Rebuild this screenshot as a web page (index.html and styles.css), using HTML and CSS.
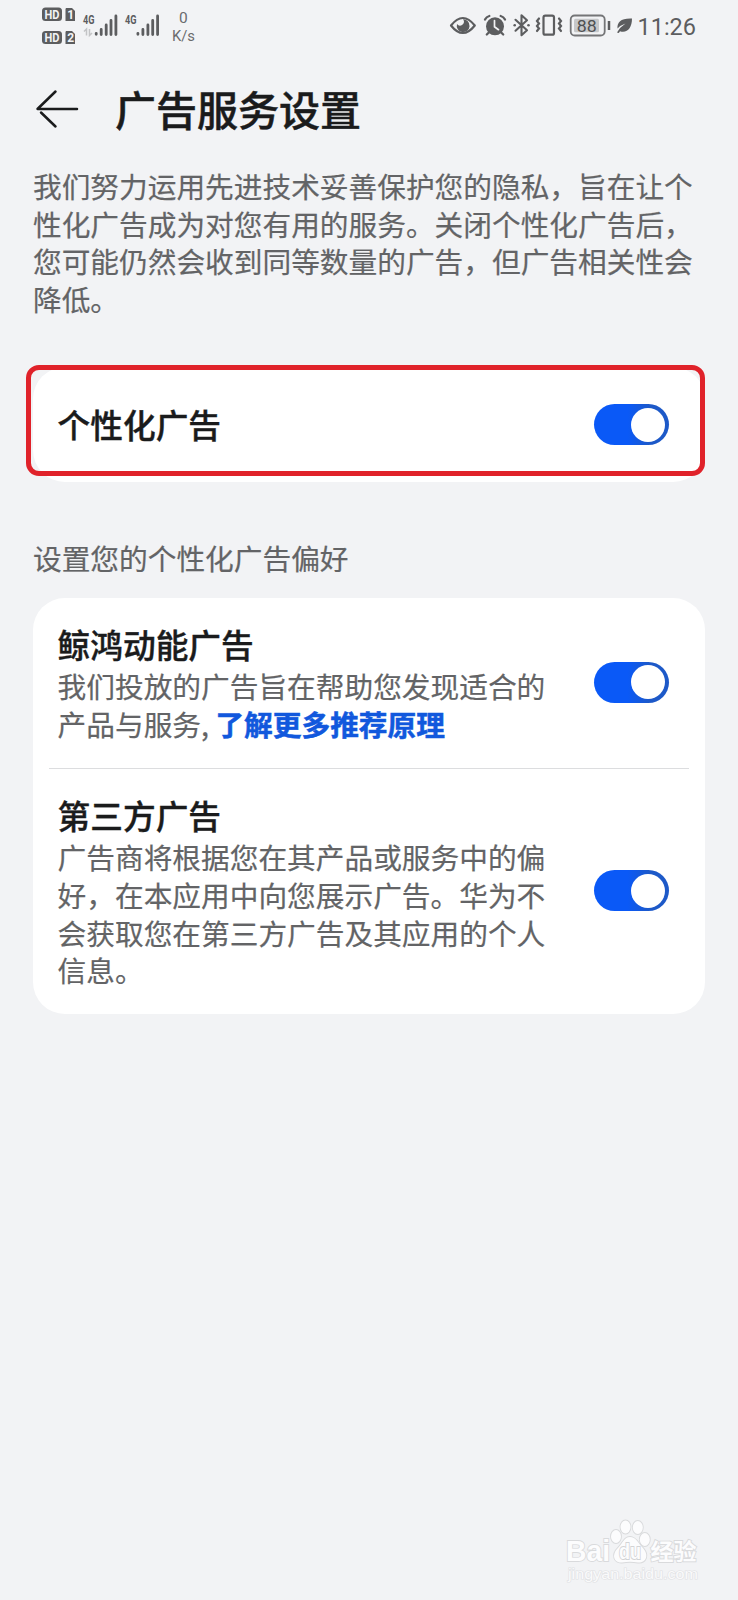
FILE: index.html
```html
<!DOCTYPE html>
<html lang="zh-CN">
<head>
<meta charset="utf-8">
<title>广告服务设置</title>
<link rel="stylesheet" href="styles.css">
</head>
<body>
<div class="screen">
  <header class="status">
    <svg class="status-left" width="160" height="50" viewBox="40 0 160 50">
      <g fill="#5c5d5f">
        <rect x="42" y="7.500" width="20" height="13.500" rx="3.500"/>
        <path d="M66 8h6l3 3v10h-9.500v-12z"/>
        <rect x="42" y="31" width="20" height="13" rx="3.500"/>
        <path d="M66 31h6l3 3v10h-9.500v-12z"/>
      </g>
      <g class="tag">
        <text x="44.500" y="18.500" textLength="15" lengthAdjust="spacingAndGlyphs">HD</text>
        <text x="67.200" y="18.800">1</text>
        <text x="44.500" y="41.800" textLength="15" lengthAdjust="spacingAndGlyphs">HD</text>
        <text x="67.200" y="42.100">2</text>
      </g>
      <g class="net">
        <text x="83" y="24.300" textLength="11.500" lengthAdjust="spacingAndGlyphs">4G</text>
        <text x="125" y="24.300" textLength="11.500" lengthAdjust="spacingAndGlyphs">4G</text>
      </g>
      <g stroke="#5c5d5f" stroke-width="2.800" stroke-linecap="round">
        <path d="M96.200 33.300v1M101.200 29.500v5M106.200 25v9.500M111 20.500v14M115.900 16v18.500"/>
        <path d="M137.900 33.300v1M142.900 29.500v5M147.900 25v9.500M152.700 20.500v14M157.600 16v18.500"/>
      </g>
      <path d="M84 31.500l2.500-2.500v6.500M89.500 29v6.500l2.500-2.500" fill="none" stroke="#c3c4c6" stroke-width="1.500"/>
      <g class="speed">
        <text x="183.300" y="23" text-anchor="middle">0</text>
        <text x="172" y="41" textLength="23" lengthAdjust="spacingAndGlyphs">K/s</text>
      </g>
    </svg>
    <svg class="status-right" width="252" height="50" viewBox="446 0 252 50">
      <path d="M451 25.500Q462.800 10.500 474.800 25.500Q462.800 40.500 451 25.500z" fill="none" stroke="#5c5d5f" stroke-width="2.200" stroke-linejoin="round"/>
      <path d="M463 19.300a3.200 3.200 0 0 1-6 4.700a6.400 6.400 0 1 0 6-4.700z" fill="#5c5d5f"/>
      <circle cx="495" cy="26.300" r="9" fill="#5c5d5f"/>
      <path d="M485 19.500q1.500-2.800 4.300-3.500M505 19.500q-1.500-2.800-4.300-3.500M489.300 32l-2.500 2.500M500.700 32l2.500 2.500" fill="none" stroke="#5c5d5f" stroke-width="2.300" stroke-linecap="round"/>
      <path d="M494.500 20.500v6.200l4 3" fill="none" stroke="#f2f3f5" stroke-width="1.700" stroke-linecap="round"/>
      <path d="M515.500 19.800l11.500 10.500-5.500 4.900v-19.900l5.500 4.900-11.500 10.500" fill="none" stroke="#5c5d5f" stroke-width="2.100" stroke-linejoin="round" stroke-linecap="round"/>
      <circle cx="514.700" cy="25.300" r="1.300" fill="#5c5d5f"/><circle cx="528.500" cy="25.300" r="1.300" fill="#5c5d5f"/>
      <rect x="543.500" y="15.700" width="10.500" height="19" rx="1.800" fill="none" stroke="#5c5d5f" stroke-width="2.200"/>
      <path d="M539 18.500l-2 2.500 2 2.500-2 2.500 2 2.500-2 2.500M559 18.500l2 2.500-2 2.500 2 2.500-2 2.500 2 2.500" fill="none" stroke="#5c5d5f" stroke-width="2.200" stroke-linecap="round"/>
      <rect x="570.700" y="15.500" width="34" height="20" rx="4" fill="none" stroke="#747577" stroke-width="1.800"/>
      <rect x="574" y="18.700" width="25" height="13.600" rx="1.500" fill="#c6c7c9"/>
      <path d="M609 21v9" stroke="#5c5d5f" stroke-width="2.500"/>
      <text class="battery" x="576.700" y="31.900" textLength="20" lengthAdjust="spacingAndGlyphs">88</text>
      <path d="M632 18.500C621 18 617 22 617.500 28.500Q621 25 625.500 23.500Q620 27 617 32.500L618.800 33L620 31.200C627 33.500 632 28 632 18.500z" fill="#5c5d5f"/>
      <text class="clock" x="637.500" y="35" textLength="58.500" lengthAdjust="spacingAndGlyphs">11:26</text>
    </svg>
  </header>

  <div class="titlebar">
    <svg class="back" width="44" height="40" viewBox="0 0 44 40"><path d="M20.500 2.500L2.500 20H42M6 23.500L20.500 37.500" fill="none" stroke="#1a1b1c" stroke-width="2.500" stroke-linecap="round" stroke-linejoin="round"/></svg>
    <h1 class="title">广告服务设置</h1>
  </div>

  <p class="intro">我们努力运用先进技术妥善保护您的隐私，旨在让个<br>性化广告成为对您有用的服务。关闭个性化广告后，<br>您可能仍然会收到同等数量的广告，但广告相关性会<br>降低。</p>

  <section class="card master">
    <h2 class="name">个性化广告</h2>
    <span class="toggle"><span class="knob"></span></span>
    <div class="highlight"></div>
  </section>

  <h3 class="section-label">设置您的个性化广告偏好</h3>

  <section class="card list">
    <div class="item first">
      <div class="copy">
        <h2 class="name">鲸鸿动能广告</h2>
        <p class="desc">我们投放的广告旨在帮助您发现适合的<br>产品与服务, <a class="link">了解更多推荐原理</a></p>
      </div>
      <span class="toggle"><span class="knob"></span></span>
    </div>
    <div class="item second">
      <div class="copy">
        <h2 class="name">第三方广告</h2>
        <p class="desc">广告商将根据您在其产品或服务中的偏<br>好，在本应用中向您展示广告。华为不<br>会获取您在第三方广告及其应用的个人<br>信息。</p>
      </div>
      <span class="toggle"><span class="knob"></span></span>
    </div>
  </section>

  <svg class="watermark" width="140" height="72" viewBox="562 1516 140 72">
    <g class="mark">
      <text class="latin" x="566" y="1561" textLength="44" lengthAdjust="spacingAndGlyphs">Bai</text>
      <ellipse cx="616" cy="1536.500" rx="5" ry="6.500"/>
      <ellipse cx="625.500" cy="1527" rx="5" ry="6.500"/>
      <ellipse cx="637.800" cy="1527.500" rx="5" ry="6.500"/>
      <ellipse cx="644.800" cy="1539.500" rx="5" ry="6.500"/>
      <path d="M630 1537C636 1537 638 1543 642 1547C650 1555 646 1563 638 1562.500Q630 1561 622 1562.500C614 1563 611 1555 618 1548C623 1543 624 1537 630 1537z"/>
      <text class="du" x="619" y="1559" textLength="22" lengthAdjust="spacingAndGlyphs">du</text>
      <text class="han" x="650.500" y="1559.500" textLength="46" lengthAdjust="spacingAndGlyphs">经验</text>
    </g>
    <text class="url" x="568" y="1579" textLength="130" lengthAdjust="spacingAndGlyphs">jingyan.baidu.com</text>
  </svg>
</div>
</body>
</html>
```

FILE: styles.css
```css
* { box-sizing: border-box; }
body {
  margin: 0;
  background: #f2f3f5;
  font-family: "Noto Sans CJK SC", sans-serif;
  color: #1a1b1c;
}
h1, h2, h3, p { margin: 0; }
.screen {
  position: relative;
  width: 738px;
  height: 1600px;
  padding: 0 33px 0 32.6px;
  overflow: hidden;
}
.status {
  display: flex;
  justify-content: space-between;
  height: 50px;
  margin: 0 7px 0 7.4px;
}
.tag { font: bold 12px Roboto, sans-serif; fill: #f2f3f5; }
.net { font: bold 13.5px Roboto, sans-serif; fill: #5c5d5f; }
.speed { font: 15.5px Roboto, sans-serif; fill: #6a6b6d; }
.battery { font: 400 16.5px Roboto, sans-serif; fill: #4f5052; }
.clock { font: 24px Roboto, sans-serif; fill: #5c5d5f; }

.titlebar {
  display: flex;
  align-items: center;
  height: 60px;
  margin-top: 28px;
  padding-left: 2.4px;
}
.back { flex: none; margin-top: 1px; }
.title {
  margin-left: 36px;
  font-size: 41px;
  line-height: 60px;
  font-weight: 500;
  -webkit-text-stroke: 0.5px #1a1b1c;
}
.intro {
  height: 151px;
  margin-top: 29px;
  padding-left: 0.4px;
  font-size: 28.7px;
  line-height: 37.7px;
  color: #636466;
  -webkit-text-stroke: 0.2px #636466;
  white-space: nowrap;
}
.card {
  background: #fff;
  border-radius: 32px;
}
.master {
  position: relative;
  display: flex;
  align-items: center;
  justify-content: space-between;
  height: 115px;
  margin-top: 49px;
  padding: 0 36px 0 25px;
}
.master .name { padding-bottom: 2px; }
.highlight {
  position: absolute;
  left: -6.6px;
  top: -2px;
  width: 679px;
  height: 111px;
  border: 5px solid #e0222a;
  border-radius: 13px;
}
.name {
  font-size: 32.7px;
  line-height: 44px;
  font-weight: 500;
  -webkit-text-stroke: 0.4px #1a1b1c;
  white-space: nowrap;
}
.toggle {
  display: flex;
  flex: none;
  align-items: center;
  justify-content: flex-end;
  width: 75px;
  height: 41px;
  padding-right: 4px;
  border-radius: 21px;
  background: linear-gradient(90deg, #0a59f7 45%, #1d59c8 75%);
}
.list .toggle { margin-bottom: 2px; }
.knob {
  width: 34px;
  height: 34px;
  border-radius: 50%;
  background: #fff;
}
.section-label {
  margin-top: 57px;
  padding-left: 0.4px;
  font-size: 28.7px;
  line-height: 38px;
  font-weight: 400;
  color: #636466;
  -webkit-text-stroke: 0.2px #636466;
}
.list {
  margin-top: 21px;
  height: 416px;
  padding: 0 16px;
}
.item {
  display: flex;
  align-items: center;
  justify-content: space-between;
  padding: 0 20px 0 9px;
}
.first {
  height: 171px;
  border-bottom: 1px solid #dcdddf;
}
.second { height: 245px; }
.copy .name { margin: -1px 0 1px; }
.desc {
  font-size: 28.7px;
  line-height: 37.7px;
  color: #636466;
  -webkit-text-stroke: 0.2px #636466;
  white-space: nowrap;
}
.link {
  color: #1158dd;
  font-weight: 700;
  -webkit-text-stroke: 0.5px #1158dd;
}

.watermark {
  position: absolute;
  left: 562px;
  top: 1516px;
  overflow: visible;
}
.mark { fill: #fcfcfd; stroke: #d9dadc; stroke-width: 1.8px; paint-order: stroke; }
.latin, .du { font: bold 29px "Liberation Sans", sans-serif; }
.du { font-size: 22px; stroke: #d2d3d5; }
.han { font: 700 23px "Noto Sans CJK SC", sans-serif; }
.url { font: 15.5px "Liberation Sans", sans-serif; fill: #fafafb; stroke: #e0e1e3; stroke-width: 1.2px; paint-order: stroke; }
```
